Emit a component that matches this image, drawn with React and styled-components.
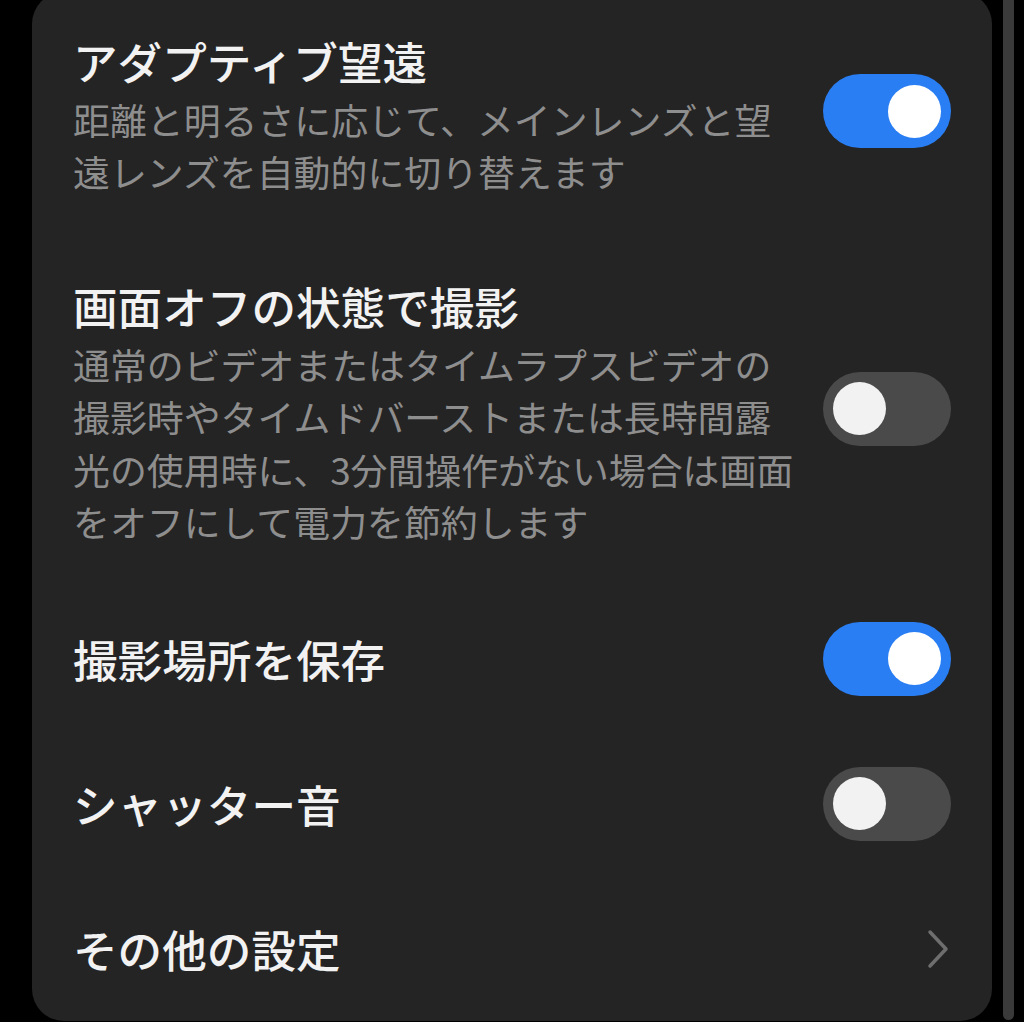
import React from "react";
import styled, { createGlobalStyle } from "styled-components";

const Global = createGlobalStyle`
  html, body {
    margin: 0;
    padding: 0;
    background: #000;
    overflow: hidden;
  }
  body {
    font-family: "Noto Sans CJK JP", "Noto Sans", sans-serif;
  }
`;

const Page = styled.div`
  display: flex;
  align-items: flex-start;
  gap: 11px;
  padding-left: 32px;
  height: 1022px;
  box-sizing: border-box;
  background: #000;
`;

const Card = styled.div`
  width: 960px;
  margin-top: -8px;
  background: #242424;
  border-radius: 32px;
  padding: 0 41px 0 41px;
  box-sizing: border-box;
  display: flex;
  flex-direction: column;
`;

const ScrollTrack = styled.div`
  width: 11px;
  height: 1020px;
  background: #3a3a3a;
  border-radius: 0 0 6px 6px;
`;

const Row = styled.div`
  display: flex;
  align-items: center;
  justify-content: space-between;
  gap: 24px;
  height: ${(p) => (p.$single ? "145px" : "auto")};
  padding: ${(p) => (p.$single ? "0" : "39px 0")};
  box-sizing: border-box;
`;

const TextBlock = styled.div`
  display: flex;
  flex-direction: column;
  gap: 2px;
  flex: 1;
  min-width: 0;
`;

const Title = styled.div`
  font-size: 44.6px;
  line-height: 60px;
  font-weight: 500;
  color: #f2f2f2;
  white-space: nowrap;
`;

const Desc = styled.div`
  font-size: 36.9px;
  line-height: 52.4px;
  font-weight: 400;
  color: #8e8e8e;
  white-space: nowrap;
`;

const Track = styled.div`
  flex: none;
  width: 128px;
  height: 74px;
  border-radius: 37px;
  background: ${(p) => (p.$on ? "#2a7ef3" : "#4a4a4a")};
  display: flex;
  align-items: center;
  justify-content: ${(p) => (p.$on ? "flex-end" : "flex-start")};
  padding: 0 10px;
  box-sizing: border-box;
  margin-bottom: ${(p) => (p.$lift ? "6px" : "0")};
`;

const Knob = styled.div`
  width: 53px;
  height: 53px;
  border-radius: 50%;
  background: ${(p) => (p.$on ? "#ffffff" : "#f2f2f2")};
`;

const Chevron = styled.svg`
  flex: none;
  width: 24px;
  height: 40px;
  margin-right: 1px;
`;

function Toggle({ on, lift }) {
  return (
    <Track $on={on} $lift={lift}>
      <Knob $on={on} />
    </Track>
  );
}

export default function App() {
  return (
    <>
      <Global />
      <Page>
        <Card>
          <Row>
            <TextBlock>
              <Title>アダプティブ望遠</Title>
              <Desc>
                距離と明るさに応じて、メインレンズと望
                <br />
                遠レンズを自動的に切り替えます
              </Desc>
            </TextBlock>
            <Toggle on lift />
          </Row>
          <Row>
            <TextBlock>
              <Title>画面オフの状態で撮影</Title>
              <Desc>
                通常のビデオまたはタイムラプスビデオの
                <br />
                撮影時やタイムドバーストまたは長時間露
                <br />
                光の使用時に、3分間操作がない場合は画面
                <br />
                をオフにして電力を節約します
              </Desc>
            </TextBlock>
            <Toggle on={false} lift />
          </Row>
          <Row $single>
            <TextBlock>
              <Title>撮影場所を保存</Title>
            </TextBlock>
            <Toggle on />
          </Row>
          <Row $single>
            <TextBlock>
              <Title>シャッター音</Title>
            </TextBlock>
            <Toggle on={false} />
          </Row>
          <Row $single>
            <TextBlock>
              <Title>その他の設定</Title>
            </TextBlock>
            <Chevron viewBox="0 0 24 40" fill="none">
              <path
                d="M4 3 L20 20 L4 37"
                stroke="#6e6e6e"
                strokeWidth="3.5"
                strokeLinecap="round"
                strokeLinejoin="round"
              />
            </Chevron>
          </Row>
        </Card>
        <ScrollTrack />
      </Page>
    </>
  );
}
